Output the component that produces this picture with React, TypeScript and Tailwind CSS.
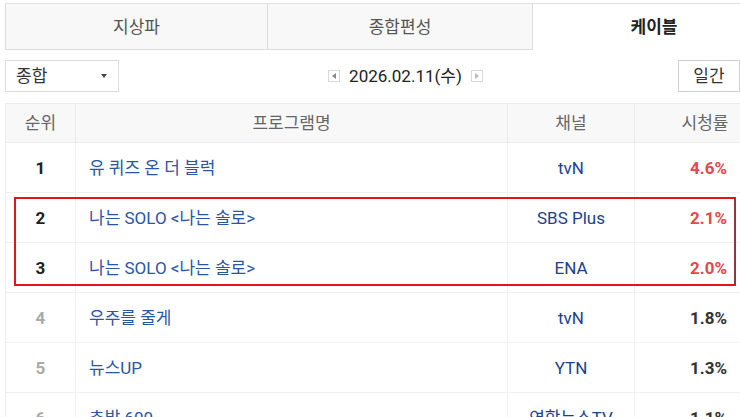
import React from 'react';

const tabs = [
  { label: '지상파', active: false },
  { label: '종합편성', active: false },
  { label: '케이블', active: true },
];

const rows = [
  { rank: 1, title: '유 퀴즈 온 더 블럭', channel: 'tvN', rating: '4.6%' },
  { rank: 2, title: '나는 SOLO <나는 솔로>', channel: 'SBS Plus', rating: '2.1%' },
  { rank: 3, title: '나는 SOLO <나는 솔로>', channel: 'ENA', rating: '2.0%' },
  { rank: 4, title: '우주를 줄게', channel: 'tvN', rating: '1.8%' },
  { rank: 5, title: '뉴스UP', channel: 'YTN', rating: '1.3%' },
  { rank: 6, title: '추발 600', channel: '연합뉴스TV', rating: '1.1%' },
];

export default function App() {
  return (
    <div
      className="relative w-[740px] h-[417px] overflow-hidden bg-white text-[17px] leading-[22px] text-[#333]"
      style={{ fontFamily: 'Roboto, "Noto Sans CJK KR", "Noto Sans", sans-serif' }}
    >
      <div className="w-[775px] pl-[5px] pt-[3px]">
        {/* Tabs */}
        <div className="flex h-[47px] border-t border-[#e2e2e2]">
          {tabs.map((t, i) => (
            <div
              key={t.label}
              className={
                t.active
                  ? 'flex-1 flex items-center justify-center bg-white font-bold text-[#222]'
                  : i === 0
                  ? 'w-[263px] flex items-center justify-center bg-[#f8f8f8] border border-t-0 border-[#dcdcdc] text-[#555]'
                  : 'w-[265px] flex items-center justify-center bg-[#f8f8f8] border border-t-0 border-l-0 border-[#dcdcdc] text-[#555]'
              }
            >
              {t.label}
            </div>
          ))}
        </div>

        {/* Controls */}
        <div className="flex items-center h-[32px] mt-[10px] w-[735px]">
          <div className="w-[114px] h-[32px] border border-[#dcdcdc] flex items-center justify-between pl-[10px] pr-[11px]">
            <span className="text-[#333]">종합</span>
            <span className="w-0 h-0 border-x-[3px] border-x-transparent border-t-[4px] border-t-[#444]" />
          </div>
          <div className="flex-1 flex items-center justify-center gap-[9px] pl-[14px]">
            <span className="w-[12px] h-[12px] border border-[#d8d8d8] flex items-center justify-center">
              <span className="w-0 h-0 border-y-[3px] border-y-transparent border-r-[4px] border-r-[#888]" />
            </span>
            <span className="text-[#222]">2026.02.11(수)</span>
            <span className="w-[12px] h-[12px] border border-[#d8d8d8] flex items-center justify-center">
              <span className="w-0 h-0 border-y-[3px] border-y-transparent border-l-[4px] border-l-[#bbb]" />
            </span>
          </div>
          <div className="w-[62px] h-[32px] border border-[#cfcfcf] flex items-center justify-center text-[#333]">
            일간
          </div>
        </div>

        {/* Table */}
        <div className="mt-[11px] border-t border-l border-[#ececec]">
          <div className="flex h-[39px] bg-[#f8f8f8] text-[#666] border-b border-[#ececec]">
            <div className="w-[70px] flex items-center justify-center border-r border-[#ececec]">순위</div>
            <div className="w-[432px] flex items-center justify-center border-r border-[#ececec]">프로그램명</div>
            <div className="w-[127px] flex items-center justify-center border-r border-[#ececec]">채널</div>
            <div className="flex-1 flex items-center justify-center">시청률</div>
          </div>
          {rows.map((r) => (
            <div key={r.rank} className="flex h-[50px] border-b border-[#f0f0f0]">
              <div
                className={
                  r.rank <= 3
                    ? 'w-[70px] flex items-center justify-center font-bold text-[#222] border-r border-[#f0f0f0]'
                    : 'w-[70px] flex items-center justify-center font-bold text-[#aaa] border-r border-[#f0f0f0]'
                }
              >
                {r.rank}
              </div>
              <div className="w-[432px] flex items-center pl-[13px] text-[#2a55a5] border-r border-[#f0f0f0]">
                {r.title}
              </div>
              <div className="w-[127px] flex items-center justify-center text-[#1e408c] border-r border-[#f0f0f0]">
                {r.channel}
              </div>
              <div
                className={
                  r.rank <= 3
                    ? 'flex-1 flex items-center justify-end pr-[48px] font-bold text-[#e5484d]'
                    : 'flex-1 flex items-center justify-end pr-[48px] font-bold text-[#333]'
                }
              >
                {r.rating}
              </div>
            </div>
          ))}
        </div>
      </div>

      {/* Highlight annotation */}
      <div className="absolute left-[14px] top-[197px] w-[722px] h-[89px] border-2 border-[#e0161b] border-r-[#8a3a3a]" />
    </div>
  );
}
